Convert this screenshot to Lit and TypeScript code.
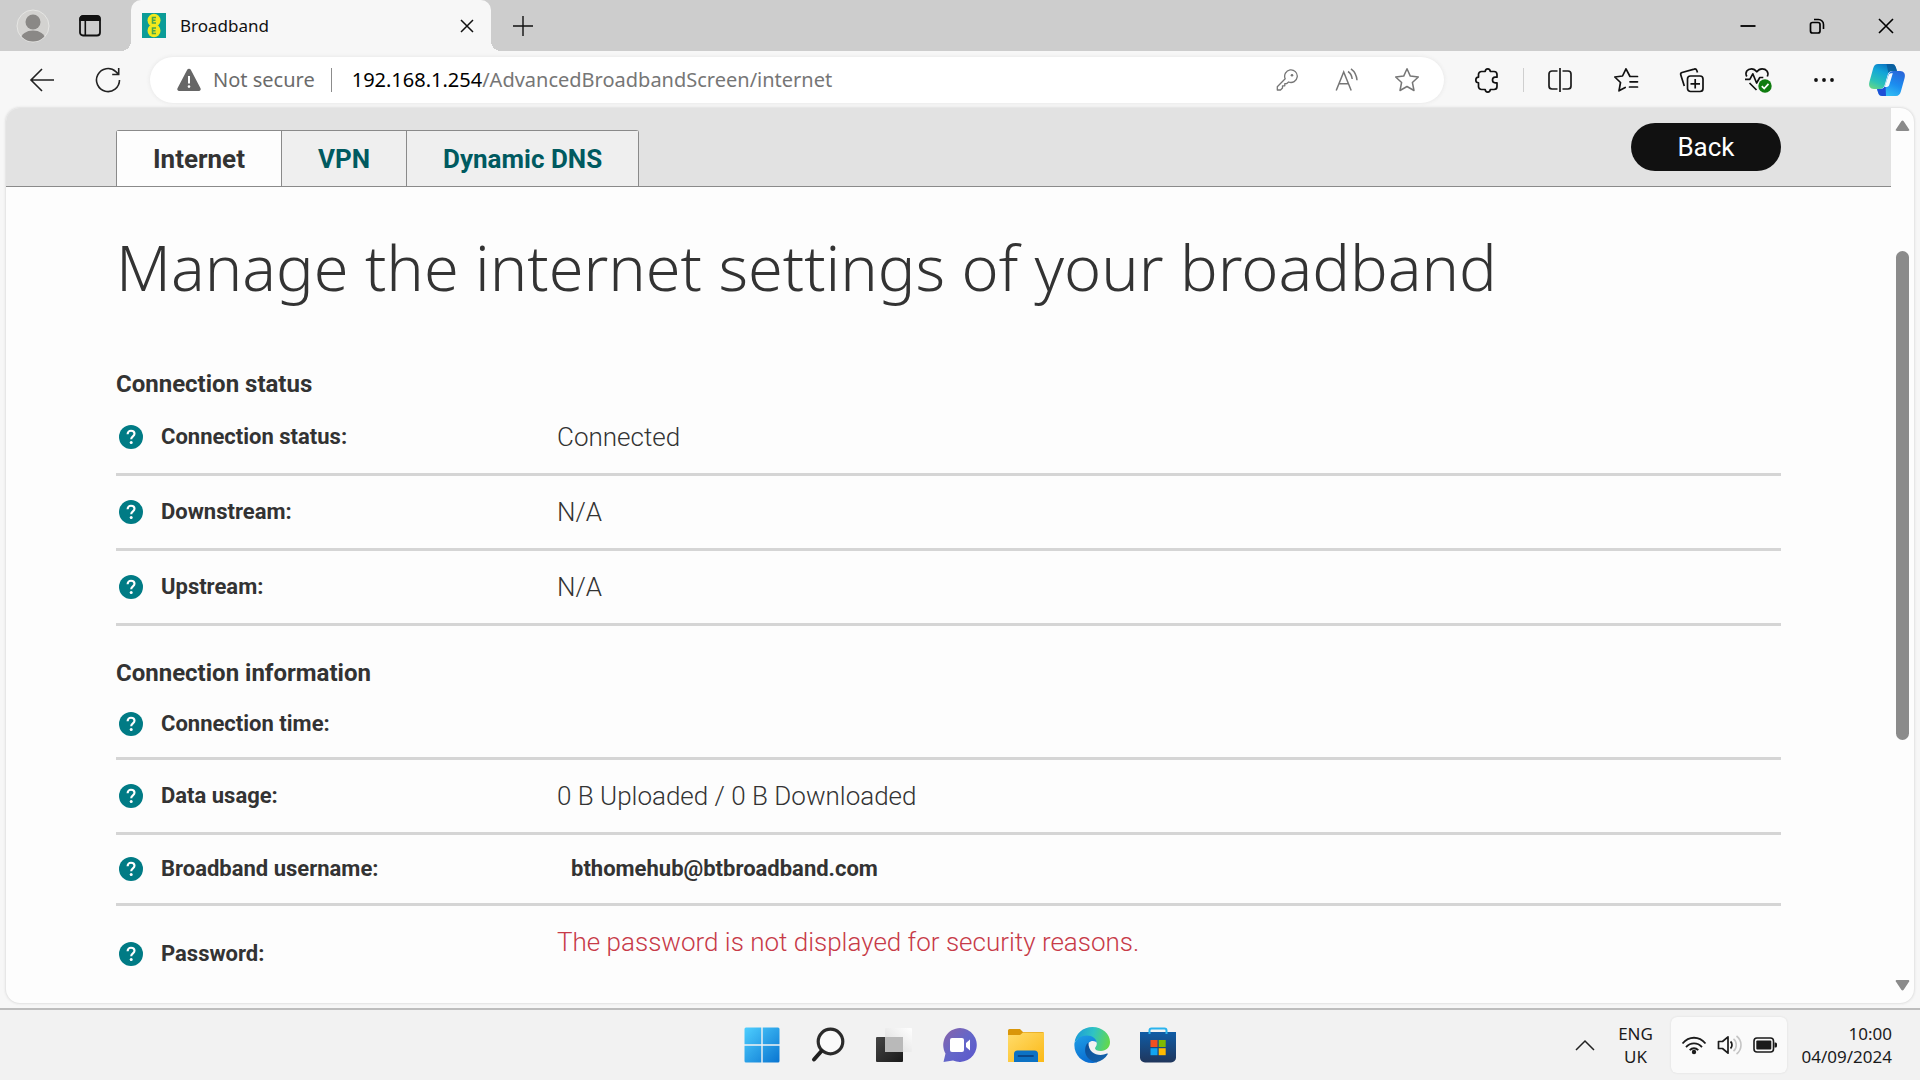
import { LitElement, html, css, svg } from "lit";
import { customElement, property } from "lit/decorators.js";

const icons: Record<string, { w: number; h: number; body: unknown }> = {
  avatar: {
    w: 34, h: 34, body: svg`
      <defs><clipPath id="av"><circle cx="17" cy="17" r="15.5"/></clipPath></defs>
      <circle cx="17" cy="17" r="16" fill="#d3d2d0" stroke="#e6e6e4"/>
      <g clip-path="url(#av)" fill="#8a8886"><circle cx="17" cy="13" r="7.5"/><ellipse cx="17" cy="30" rx="12" ry="8.5"/></g>` },
  tabs: {
    w: 24, h: 24, body: svg`
      <rect x="2" y="2" width="20" height="19.5" rx="3" fill="none" stroke="#111" stroke-width="1.8"/>
      <path d="M1.5 7V5a3.5 3.5 0 0 1 3.5-3.500h14A3.500 3.500 0 0 1 22.500 5v2z" fill="#111"/>
      <path d="M7.300 7v14" stroke="#111" stroke-width="1.600"/>` },
  plus: { w: 22, h: 22, body: svg`<path d="M11 1v20M1 11h20" stroke="#111" stroke-width="1.4"/>` },
  close: { w: 14, h: 14, body: svg`<path d="M1 1l12 12M13 1L1 13" stroke="#111" stroke-width="1.5"/>` },
  min: { w: 16, h: 14, body: svg`<path d="M.5 7h15" stroke="#000" stroke-width="1.8"/>` },
  restore: {
    w: 16, h: 16, body: svg`
      <rect x="1.500" y="4.500" width="9.500" height="10.500" rx="2" fill="none" stroke="#000" stroke-width="1.700"/>
      <path d="M5 1.500h4.500a5 5 0 0 1 5 5V11" fill="none" stroke="#000" stroke-width="1.600"/>` },
  winclose: { w: 16, h: 16, body: svg`<path d="M1 1l14 14M15 1L1 15" stroke="#000" stroke-width="1.600"/>` },
  back: { w: 26, h: 26, body: svg`<path d="M25 13H2M13 2L2 13l11 11" fill="none" stroke="#222" stroke-width="1.600"/>` },
  reload: {
    w: 26, h: 26, body: svg`
      <path d="M24.500 13A11.500 11.500 0 1 1 20.800 4.600L23.500 7.200M23.700 1v6.500h-6.500" fill="none" stroke="#222" stroke-width="1.600"/>` },
  warning: {
    w: 26, h: 24, body: svg`
      <path d="M11.200 1.800a2 2 0 0 1 3.600 0l9.700 18.500a1.800 1.800 0 0 1-1.600 2.700H3.100a1.800 1.800 0 0 1-1.600-2.700z" fill="#666"/>
      <path d="M13 8v7.500" stroke="#fff" stroke-width="2"/><circle cx="13" cy="18.600" r="1.300" fill="#fff"/>` },
  key: {
    w: 22, h: 22, body: svg`
      <g fill="none" stroke="#767676" stroke-width="1.300" stroke-linejoin="round">
      <path d="M9.200 9.700A6.300 6.300 0 1 1 12.600 13L10.800 14.600H8.800V16.800H6.500V19L4.500 21H1.300V17.700z"/></g>
      <circle cx="16" cy="6.200" r="1.300" fill="#767676"/>` },
  read: {
    w: 24, h: 24, body: svg`
      <g fill="none" stroke="#767676" stroke-width="1.500">
      <path d="M1.200 22.500L8.700 4l7.500 18.500M4 15.800h9.400"/><path d="M13 3.500c2.500 1.600 3.800 4 4.200 7.500M16 .8c3.600 2.600 5.600 6.200 6 11.500"/></g>` },
  star: {
    w: 26, h: 26, body: svg`
      <path d="M13 1.800l3.300 7.300 8 .9-5.900 5.500 1.600 8L13 19.500 6 23.500l1.600-8L1.700 10l8-.9z" fill="none" stroke="#767676" stroke-width="1.500" stroke-linejoin="round"/>` },
  puzzle: {
    w: 26, h: 26, body: svg`
      <path d="M7.500 4.500h3.700c.2-3.600 4.900-3.600 5.100 0H20a3 3 0 0 1 3 3v2.700h-1.800c-3.600.2-3.600 5.400 0 5.600H23v3.700a3 3 0 0 1-3 3h-3.700c-.2 3.400-4.900 3.400-5.100 0H7.500a3 3 0 0 1-3-3v-3.700c-3.600-.2-3.600-5.400 0-5.600V7.500a3 3 0 0 1 3-3z" fill="none" stroke="#111" stroke-width="1.700" stroke-linejoin="round"/>` },
  split: {
    w: 26, h: 26, body: svg`
      <g fill="none" stroke="#1c1c1c" stroke-width="1.700">
      <path d="M10.500 4H5a3 3 0 0 0-3 3v12a3 3 0 0 0 3 3h5.500M15.500 4H21a3 3 0 0 1 3 3v12a3 3 0 0 1-3 3h-5.500M13 1v24"/></g>` },
  favs: {
    w: 26, h: 26, body: svg`
      <g fill="none" stroke="#111" stroke-width="1.700" stroke-linejoin="round" stroke-linecap="round">
      <path d="M24.500 9.500h-7.500L13 1.800 9.500 9 1.800 10l5.700 5.500-1.500 8.300 6.200-3.400M17 14.800H24.500M16.500 20H24.500"/></g>` },
  collections: {
    w: 26, h: 26, body: svg`
      <g fill="none" stroke="#111" stroke-width="1.700" stroke-linejoin="round">
      <rect x="8.500" y="9" width="15.500" height="15.500" rx="3"/><path d="M16.200 12v9.500M11.500 16.800h9.500M18.500 5.500l-.8-2.200a2 2 0 0 0-2.500-1.200L3 5.500A2 2 0 0 0 1.800 8l3.500 11"/></g>` },
  health: {
    w: 30, h: 30, body: svg`
      <g fill="none" stroke="#111" stroke-width="1.700" stroke-linejoin="round">
      <path d="M3.800 11.500C1.500 7 4.500 3.800 8.500 3.800c2.500 0 4 1.200 5.300 3 1.300-1.800 2.800-3 5.300-3 4 0 7.200 3.200 5.200 7.700M2 14.300h4.800l3-5.500 3.800 9.200 3.200-5.500h3.500M6.500 18L13.500 25"/></g>
      <circle cx="22" cy="21" r="6.700" fill="#107c10"/><path d="M18.800 21.200l2.400 2.300 4.300-4.600" fill="none" stroke="#fff" stroke-width="1.700"/>` },
  dots: { w: 22, h: 6, body: svg`<g fill="#111"><circle cx="3" cy="3" r="1.900"/><circle cx="11" cy="3" r="1.900"/><circle cx="19" cy="3" r="1.900"/></g>` },
  copilot: {
    w: 38, h: 34, body: svg`
      <defs>
      <linearGradient id="c1" x1=".7" y1="0" x2=".2" y2="1"><stop offset="0" stop-color="#0a6fbf"/><stop offset=".35" stop-color="#13a5d8"/><stop offset=".75" stop-color="#2cc3b8"/><stop offset="1" stop-color="#62d48a"/></linearGradient>
      <linearGradient id="c2" x1=".8" y1="0" x2=".3" y2="1"><stop offset="0" stop-color="#2a66d9"/><stop offset=".5" stop-color="#1b8df0"/><stop offset="1" stop-color="#35c3f3"/></linearGradient></defs>
      <path d="M10 1h13.500c2.500 0 3.600 1.200 4.300 3.300L29 8h-4.500c-3 0-4.200 1.600-5 4.500l-2.800 9.500c-.9 2.600-2.300 4-5 4H6C2 26 .3 23 1.400 19L5.200 5.200C6 2.500 7.500 1 10 1z" fill="url(#c1)"/>
      <path d="M18.500 1h5c2.500 0 3.600 1.200 4.300 3.300L29 8h-4.500c-2 0-3.200.6-4.100 2z" fill="#0b5a94" opacity=".75"/>
      <path d="M28 33H14.500c-2.500 0-3.600-1.200-4.300-3.300L9 26h3.500c3 0 4.200-1.600 5-4.500l2.800-9.500c.9-2.600 2.300-4 5-4H32c4 0 5.700 3 4.600 7l-3.800 13.800C32 31.500 30.500 33 28 33z" fill="url(#c2)"/>
      <path d="M18 33h-3.500c-2.500 0-3.600-1.200-4.300-3.300L9 26h3.500c3 0 4.200-1.600 5-4.500z" fill="#1f4fd6"/>
      <path d="M24.800 10.200h-1.600c-1.700 0-2.500 1.200-3 3L16.700 24h2c1.500 0 2.300-1 2.800-2.800z" fill="#f4fbff"/>` },
  favicon: {
    w: 24, h: 25, body: svg`
      <rect width="24" height="25" fill="#0b9c98"/>
      <circle cx="12" cy="7.300" r="6.500" fill="#f2e91d"/><circle cx="12" cy="17.700" r="6.500" fill="#f2e91d"/>
      <g fill="none" stroke="#4aa64b" stroke-width="1.500"><path d="M14 4.500h-3.500v5.500H14M10.500 7.200H13.500M14 15h-3.500v5.500H14M10.500 17.700H13.500"/></g>` },
  help: {
    w: 24, h: 24, body: svg`
      <circle cx="12" cy="12" r="12" fill="#007b85"/>
      <path d="M8.600 9.200C8.600 7 10 5.800 12 5.800s3.500 1.200 3.500 3c0 2.500-3.300 2.600-3.300 5.400" fill="none" stroke="#fff" stroke-width="2.100"/>
      <circle cx="12.200" cy="17.600" r="1.500" fill="#fff"/>` },
  up: { w: 15, h: 12, body: svg`<path d="M6.300 1.200a1.500 1.500 0 0 1 2.400 0l5.300 8c.7 1 .2 1.800-1 1.800H2c-1.200 0-1.700-.8-1-1.800z" fill="#8b8b8b"/>` },
  down: { w: 15, h: 12, body: svg`<path d="M6.300 10.800a1.500 1.500 0 0 0 2.400 0l5.300-8c.7-1 .2-1.800-1-1.800H2C.8 1 .3 1.800 1 2.800z" fill="#8b8b8b"/>` },
  start: {
    w: 36, h: 36, body: svg`
      <defs><linearGradient id="s1" x1="0" y1="0" x2="1" y2="1" gradientUnits="objectBoundingBox"><stop offset="0" stop-color="#4fd0ff"/><stop offset="1" stop-color="#0873d0"/></linearGradient>
      <mask id="sm"><rect x=".5" y=".5" width="35" height="35" rx="1.500" fill="#fff"/><path d="M18 0v36M0 18h36" stroke="#000" stroke-width="1.400"/></mask></defs>
      <rect width="36" height="36" fill="url(#s1)" mask="url(#sm)"/>` },
  search: {
    w: 36, h: 36, body: svg`
      <circle cx="20.500" cy="14.500" r="12.300" fill="#fafafa" stroke="#2b2b2b" stroke-width="3.200"/>
      <path d="M11.500 24L4 32.500" stroke="#1f1f1f" stroke-width="4" stroke-linecap="round"/>` },
  taskview: {
    w: 36, h: 36, body: svg`
      <defs><linearGradient id="t1" x1="0" y1="0" x2="1" y2="1"><stop offset="0" stop-color="#454545"/><stop offset="1" stop-color="#1a1a1a"/></linearGradient>
      <linearGradient id="t2" x1="1" y1="0" x2="0" y2="1"><stop offset="0" stop-color="#fff"/><stop offset="1" stop-color="#dadada"/></linearGradient></defs>
      <rect x="0" y="10" width="27" height="25" rx="1" fill="url(#t1)"/>
      <rect x="9" y="1" width="27" height="24" rx="1" fill="url(#t2)"/>
      <rect x="9" y="10" width="18" height="15" fill="#b9b9b9"/>` },
  chat: {
    w: 36, h: 36, body: svg`
      <defs><linearGradient id="h1" x1="0" y1="0" x2="1" y2="1"><stop offset="0" stop-color="#8a63a8"/><stop offset=".5" stop-color="#6467c9"/><stop offset="1" stop-color="#5a55cc"/></linearGradient></defs>
      <path d="M18 1a17 17 0 1 1-7 32.600L1.500 35l2-8.500A17 17 0 0 1 18 1z" fill="url(#h1)"/>
      <rect x="8" y="11" width="14" height="14" rx="2" fill="#fff"/><path d="M24 16l4-3.500v11L24 20z" fill="#fff"/>` },
  folder: {
    w: 36, h: 36, body: svg`
      <defs><linearGradient id="f1" x1="0" y1="0" x2="1" y2="1"><stop offset="0" stop-color="#ffdc6c"/><stop offset="1" stop-color="#fbb917"/></linearGradient></defs>
      <path d="M0 3.500A1.500 1.500 0 0 1 1.500 2H12l3 3h19.500A1.500 1.500 0 0 1 36 6.500V12H0z" fill="#d9960a"/>
      <path d="M0 8h12l3-2.500h21V35H0z" fill="url(#f1)"/>
      <path d="M6 35V27a3.500 3.500 0 0 1 3.500-3.500h17A3.500 3.500 0 0 1 30 27v8z" fill="#0c72c4"/>
      <path d="M10.500 29h14.500" stroke="#09488a" stroke-width="1.800" stroke-linecap="round"/>` },
  edge: {
    w: 36, h: 36, body: svg`
      <defs>
      <linearGradient id="e1" x1="0" y1=".3" x2="1" y2=".5"><stop offset="0" stop-color="#1b9ad8"/><stop offset=".5" stop-color="#2fc3c4"/><stop offset="1" stop-color="#62d84e"/></linearGradient>
      <linearGradient id="e2" x1="0" y1="0" x2=".4" y2="1"><stop offset="0" stop-color="#1f9fe6"/><stop offset="1" stop-color="#0a6ed1"/></linearGradient>
      <linearGradient id="e3" x1="0" y1="0" x2="1" y2="1"><stop offset="0" stop-color="#0b4d96"/><stop offset="1" stop-color="#1565ae"/></linearGradient></defs>
      <path d="M.5 16C1.500 6.500 9 0 18.500 0 28.500 0 36 7 36 15c0 5.500-4 9-9 9-4 0-6-1.300-6-2.800 0-1 1.800-1.700 1.800-4.700 0-3.500-4-6.500-9.300-6.500C7.500 10 2.500 12 .5 16z" fill="url(#e1)"/>
      <path d="M.5 16C2.800 11.500 7.500 8.500 12.800 8.500c5.800 0 9.700 3.300 10 7.500-1.800-3-8.500-3-9.800 3.500C11.800 26 17 33 24 34.800 21.500 36 19 36 18 36 8 36-.8 27 .5 16z" fill="url(#e2)"/>
      <path d="M14.500 15.500C9.500 18.500 8.500 33 22.500 35.200 27.500 34 31.500 31 33.700 27.300c.4-.7-.2-1.100-.8-.8C25.500 30 14 27 14.500 15.500z" fill="url(#e3)"/>` },
  store: {
    w: 36, h: 36, body: svg`
      <defs><linearGradient id="m1" x1="0" y1="0" x2="0" y2="1"><stop offset="0" stop-color="#0f5ca6"/><stop offset="1" stop-color="#20365c"/></linearGradient></defs>
      <path d="M0 5h36v25.500a5 5 0 0 1-5 5H5a5 5 0 0 1-5-5z" fill="url(#m1)"/>
      <path d="M9.500 7V3.500A2 2 0 0 1 11.500 1.500h13A2 2 0 0 1 26.500 3.500V7" fill="none" stroke="#2bb4ee" stroke-width="2"/>
      <path d="M10.500 13h7v7h-7z" fill="#f25022"/><path d="M18.700 13h7v7h-7z" fill="#7fba00"/><path d="M10.500 21.200h7v7h-7z" fill="#12a5f0"/><path d="M18.700 21.200h7v7h-7z" fill="#ffb900"/>` },
  chevron: { w: 20, h: 12, body: svg`<path d="M1 11l9-9 9 9" fill="none" stroke="#222" stroke-width="1.500"/>` },
  wifi: {
    w: 26, h: 20, body: svg`
      <g fill="none" stroke="#1b1b1b" stroke-width="1.800"><path d="M1.500 8.500C8 .8 18 .8 24.500 8.500M5 12.200c4.500-5 11.500-5 16 0M8.700 15.200c2.500-2.600 6-2.600 8.600 0"/></g>
      <circle cx="13" cy="17" r="2.200" fill="#1b1b1b"/>` },
  speaker: {
    w: 26, h: 20, body: svg`
      <path d="M1.500 6.500h4L11 1.800v16.400L5.500 13.500h-4z" fill="none" stroke="#1b1b1b" stroke-width="1.700" stroke-linejoin="round"/>
      <path d="M13.500 6.500c2 1.800 2 5.200 0 7" fill="none" stroke="#1b1b1b" stroke-width="1.700"/>
      <path d="M16.500 3.800c3.700 3 3.700 9.400 0 12.400M19.500 1c6 4.500 6 13.500 0 18" fill="none" stroke="#c4c4c4" stroke-width="1.600"/>` },
  battery: {
    w: 24, h: 16, body: svg`
      <rect x="1" y="1" width="19.500" height="14" rx="3" fill="none" stroke="#1b1b1b" stroke-width="1.600"/>
      <rect x="3.300" y="3.500" width="15" height="9" rx="1" fill="#1b1b1b"/><path d="M21.500 5.500h1a1.500 1.500 0 0 1 1.500 1.500v2a1.500 1.500 0 0 1-1.500 1.500h-1z" fill="#1b1b1b"/>` },
};

const icon = (name: string) => {
  const i = icons[name];
  return html`<svg class="icon" width=${i.w} height=${i.h} viewBox="0 0 ${i.w} ${i.h}" aria-hidden="true">${i.body}</svg>`;
};

const reset = css`
  * { box-sizing: border-box; }
  .icon { display: block; flex: none; }
  button { margin: 0; padding: 0; border: 0; background: none; font: inherit; color: inherit; display: flex; align-items: center; justify-content: center; }
`;

@customElement("browser-chrome")
class BrowserChrome extends LitElement {
  static styles = [reset, css`
    :host { display: block; background: #f7f7f7; font-family: "Noto Sans", sans-serif; color: #111; }
    .strip { display: flex; height: 51px; background: #cdcdcd; align-items: center; }
    .profile { width: 66px; }
    .tabmenu { width: 48px; }
    .tab { position: relative; display: flex; align-items: center; align-self: stretch; width: 360px; margin-left: 17px; padding: 0 17px 0 11px; gap: 14px; background: #f7f7f7; border-radius: 10px 10px 0 0; font-size: 17px; }
    .tab::before, .tab::after { content: ""; position: absolute; bottom: 0; width: 10px; height: 10px; }
    .tab::before { right: 100%; background: radial-gradient(circle at 0 0, transparent 10px, #f7f7f7 10px); }
    .tab::after { left: 100%; background: radial-gradient(circle at 100% 0, transparent 10px, #f7f7f7 10px); }
    .tabtitle { flex: 1; }
    .new { width: 64px; height: 50px; }
    .window { display: flex; margin-left: auto; }
    .window button { width: 69px; height: 50px; }
    .bar { display: flex; align-items: center; height: 57px; padding: 0 3px 0 9px; }
    .nav { width: 66px; height: 48px; }
    .address { display: flex; align-items: center; flex: 1; height: 46px; margin: 0 10px 0 9px; padding: 0 7px 0 26px; background: #fff; border-radius: 23px; box-shadow: 0 0 4px #e4e4e4; font-size: 20px; }
    .secure { gap: 11px; height: 44px; color: #6b6b6b; white-space: nowrap; }
    .line { width: 1px; height: 24px; background: #8c8c8c; margin: 0 20px 0 16px; }
    .url { flex: 1; white-space: nowrap; color: #767676; text-decoration: none; }
    .host { color: #000; }
    .action { width: 60px; height: 44px; }
    .tool { width: 66px; height: 48px; }
    .copilot { width: 60px; height: 48px; }
    .sep { width: 1px; height: 24px; background: #cfcfcf; margin: 0 3px; }
  `];
  render() {
    const tool = (name: string, label: string) => html`<button class="tool" aria-label=${label}>${icon(name)}</button>`;
    return html`
      <div class="strip">
        <button class="profile" aria-label="Profile">${icon("avatar")}</button>
        <button class="tabmenu" aria-label="Tab actions menu">${icon("tabs")}</button>
        <div class="tab">${icon("favicon")}<span class="tabtitle">Broadband</span><button aria-label="Close tab">${icon("close")}</button></div>
        <button class="new" aria-label="New tab">${icon("plus")}</button>
        <div class="window">
          <button aria-label="Minimise">${icon("min")}</button>
          <button aria-label="Restore">${icon("restore")}</button>
          <button aria-label="Close">${icon("winclose")}</button>
        </div>
      </div>
      <div class="bar">
        <button class="nav" aria-label="Go back">${icon("back")}</button>
        <button class="nav" aria-label="Refresh">${icon("reload")}</button>
        <div class="address">
          <button class="secure">${icon("warning")}Not secure</button>
          <span class="line"></span>
          <a class="url" href="#"><span class="host">192.168.1.254</span>/AdvancedBroadbandScreen/internet</a>
          <button class="action" aria-label="Saved password">${icon("key")}</button>
          <button class="action" aria-label="Read aloud">${icon("read")}</button>
          <button class="action" aria-label="Add to favourites">${icon("star")}</button>
        </div>
        ${tool("puzzle", "Extensions")}
        <span class="sep"></span>
        ${tool("split", "Split screen")}${tool("favs", "Favourites")}${tool("collections", "Collections")}
        ${tool("health", "Browser essentials")}${tool("dots", "Settings and more")}
        <button class="copilot" aria-label="Copilot">${icon("copilot")}</button>
      </div>`;
  }
}

type Row = { label: string; value?: string; kind?: "compact" | "field" | "notice" };

@customElement("info-section")
class InfoSection extends LitElement {
  @property() heading = "";
  @property({ attribute: false }) rows: Row[] = [];
  static styles = [reset, css`
    :host { display: block; }
    h2 { margin: 0; font-size: 24px; line-height: 34px; font-weight: 700; }
    .row { display: grid; grid-template-columns: 441px 1fr; align-items: center; min-height: 75px; border-bottom: 3px solid #d5d5d5; font-size: 26px; line-height: 32px; font-weight: 300; }
    .compact { min-height: 70px; }
    .field { min-height: 71px; }
    .notice { min-height: 96px; border-bottom: 0; color: #c73a48; }
    .notice .value { padding-bottom: 24px; }
    .name { display: flex; align-items: center; gap: 18px; padding-left: 3px; color: #333; font-size: 22px; font-weight: 700; }
    .help { border-radius: 50%; }
    input { width: 100%; max-width: 600px; margin: 0; padding: 0 14px; border: 0; background: transparent; color: inherit; font: inherit; font-size: 22px; line-height: 32px; font-weight: 700; }
  `];
  render() {
    return html`
      <h2>${this.heading}</h2>
      ${this.rows.map((r, i) => html`
        <div class="row ${r.kind ?? ""}">
          <div class="name"><button class="help" aria-label="Help: ${r.label}">${icon("help")}</button><label for="f${i}">${r.label}:</label></div>
          ${r.kind === "field"
            ? html`<input id="f${i}" type="text" .value=${r.value ?? ""} />`
            : html`<output id="f${i}" class="value">${r.value ?? ""}</output>`}
        </div>`)}`;
  }
}

@customElement("router-page")
class RouterPage extends LitElement {
  static styles = [reset, css`
    :host { display: flex; margin: 0 6px 5px; background: #fdfdfd; border-radius: 14px; overflow: hidden; box-shadow: 0 0 3px #c8c8c8; font-family: Roboto, sans-serif; color: #333; }
    .page { flex: 1; min-width: 0; }
    header { display: flex; justify-content: space-between; align-items: flex-end; height: 79px; padding: 0 110px; background: #e2e2e2; border-bottom: 1px solid #8a8a8a; }
    nav { display: flex; height: 56px; border: 1px solid #8a8a8a; border-bottom: 0; border-radius: 3px 3px 0 0; }
    nav a { display: flex; align-items: center; padding: 0 36px; background: #efefef; color: #005a60; font-size: 26px; font-weight: 700; text-decoration: none; }
    nav a + a { border-left: 1px solid #8a8a8a; }
    nav .current { background: #fdfdfd; color: #333; }
    .back { align-self: center; width: 150px; height: 48px; border-radius: 24px; background: #111; color: #fff; font-size: 26px; }
    main { padding: 48px 110px 0; }
    h1 { margin: 0 0 68px; font-family: "Noto Sans", sans-serif; font-size: 63px; line-height: 64px; font-weight: 300; }
    info-section + info-section { margin-top: 30px; }
    .scroll { display: flex; flex-direction: column; align-items: center; width: 23px; }
    .scroll button { height: 36px; }
    .before { flex: 107; }
    .thumb { flex: 489; width: 13px; border-radius: 7px; background: #8b8b8b; }
    .after { flex: 227; }
  `];
  private status: Row[] = [
    { label: "Connection status", value: "Connected" },
    { label: "Downstream", value: "N/A" },
    { label: "Upstream", value: "N/A" },
  ];
  private info: Row[] = [
    { label: "Connection time", kind: "compact" },
    { label: "Data usage", value: "0 B Uploaded / 0 B Downloaded" },
    { label: "Broadband username", value: "bthomehub@btbroadband.com", kind: "field" },
    { label: "Password", value: "The password is not displayed for security reasons.", kind: "notice" },
  ];
  render() {
    return html`
      <div class="page">
        <header>
          <nav><a class="current" href="#internet">Internet</a><a href="#vpn">VPN</a><a href="#dns">Dynamic DNS</a></nav>
          <button class="back">Back</button>
        </header>
        <main>
          <h1>Manage the internet settings of your broadband</h1>
          <info-section heading="Connection status" .rows=${this.status}></info-section>
          <info-section heading="Connection information" .rows=${this.info}></info-section>
        </main>
      </div>
      <div class="scroll">
        <button aria-label="Scroll up">${icon("up")}</button>
        <span class="before"></span><span class="thumb"></span><span class="after"></span>
        <button aria-label="Scroll down">${icon("down")}</button>
      </div>`;
  }
}

@customElement("task-bar")
class TaskBar extends LitElement {
  static styles = [reset, css`
    :host { display: grid; grid-template-columns: 1fr auto 1fr; align-items: center; box-sizing: border-box; min-height: 72px; border-top: 2px solid #bdbdbd; background: #f2f2f2; font-family: "Noto Sans", sans-serif; font-size: 17px; line-height: 23px; color: #1b1b1b; }
    .apps { grid-column: 2; display: flex; }
    .apps button { width: 66px; height: 60px; }
    .tray { display: flex; justify-content: flex-end; align-items: center; padding-right: 28px; }
    .more { width: 50px; height: 56px; }
    .lang { width: 52px; height: 56px; text-align: center; }
    .quick { gap: 10px; height: 56px; padding: 0 10px; margin: 0 15px 0 9px; background: #fafafa; border-radius: 6px; box-shadow: 0 0 2px #d8d8d8; }
    .clock { text-align: right; }
  `];
  render() {
    const apps = [["start", "Start"], ["search", "Search"], ["taskview", "Task view"], ["chat", "Chat"], ["folder", "File Explorer"], ["edge", "Microsoft Edge"], ["store", "Microsoft Store"]];
    return html`
      <div class="apps">${apps.map(([n, l]) => html`<button aria-label=${l}>${icon(n)}</button>`)}</div>
      <div class="tray">
        <button class="more" aria-label="Show hidden icons">${icon("chevron")}</button>
        <button class="lang">ENG<br />UK</button>
        <button class="quick" aria-label="Network, volume, battery">${icon("wifi")}${icon("speaker")}${icon("battery")}</button>
        <div class="clock">10:00<br />04/09/2024</div>
      </div>`;
  }
}

@customElement("app-root")
class AppRoot extends LitElement {
  static styles = css`
    :host { display: flex; flex-direction: column; min-height: 100vh; background: #f7f7f7; }
    router-page { flex: 1; }
  `;
  render() {
    return html`<browser-chrome></browser-chrome><router-page></router-page><task-bar></task-bar>`;
  }
}
